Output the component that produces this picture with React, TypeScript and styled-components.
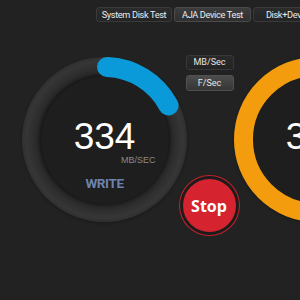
import React from "react";
import styled, { createGlobalStyle } from "styled-components";

const Global = createGlobalStyle`
  html, body {
    margin: 0;
    padding: 0;
    background: #222222;
    overflow: hidden;
  }
  body {
    font-family: "Open Sans", "Liberation Sans", sans-serif;
  }
`;

const Page = styled.div`
  width: 420px;
  height: 300px;
  padding-top: 7px;
  box-sizing: border-box;
  background: #222222;
`;

const TabBar = styled.div`
  display: flex;
  gap: 2px;
  margin-left: 96px;
`;

const Tab = styled.div<{ $w: number; $active?: boolean }>`
  width: ${(p) => p.$w}px;
  height: 15px;
  box-sizing: border-box;
  border: 1px solid ${(p) => (p.$active ? "#4a4a4a" : "#3a3a3a")};
  border-radius: 3px;
  background: ${(p) =>
    p.$active ? "linear-gradient(#3d3d3d, #2f2f2f)" : "linear-gradient(#2c2c2c, #242424)"};
  color: #ececec;
  font-family: Roboto, "Liberation Sans", sans-serif;
  font-size: 9.2px;
  letter-spacing: -0.35px;
  line-height: 13px;
  text-align: center;
  white-space: nowrap;
  overflow: hidden;
`;

const Main = styled.div`
  display: flex;
  align-items: flex-start;
  margin-top: 35px;
  padding-left: 22px;
`;

const GaugeBox = styled.div`
  position: relative;
  width: 165px;
  height: 165px;
  flex: none;
  border-radius: 50%;
  background: radial-gradient(
    closest-side,
    #202020 76%,
    #2a2a2a 82%,
    #363636 95%,
    #2f2f2f 100%
  );
  box-shadow: 0 1px 3px rgba(0, 0, 0, 0.3);
  display: flex;
  align-items: center;
  justify-content: center;
`;

const Disc = styled.div`
  width: 128px;
  height: 128px;
  border-radius: 50%;
  background: #1e1e1e;
  box-shadow: 0 0 4px 1px rgba(0, 0, 0, 0.45);
  display: flex;
  flex-direction: column;
  align-items: center;
  padding-top: 42px;
  box-sizing: border-box;
`;

const Value = styled.div`
  font-family: "Liberation Sans", Arial, sans-serif;
  font-size: 37px;
  line-height: 37px;
  color: #ffffff;
`;

const Unit = styled.div`
  align-self: stretch;
  text-align: right;
  padding-right: 13px;
  font-family: "Liberation Sans", Arial, sans-serif;
  font-size: 9px;
  line-height: 10px;
  color: #8a8a8a;
`;

const Label = styled.div<{ $color: string }>`
  margin-top: 11px;
  font-family: Roboto, "Liberation Sans", sans-serif;
  font-weight: 700;
  font-size: 13.5px;
  line-height: 14px;
  letter-spacing: -0.4px;
  color: ${(p) => p.$color};
`;

const ArcLayer = styled.svg`
  position: absolute;
  left: 0;
  top: 0;
  width: 165px;
  height: 165px;
  pointer-events: none;
`;

const Middle = styled.div`
  width: 47px;
  flex: none;
  display: flex;
  flex-direction: column;
  align-items: center;
  margin-top: -2px;
`;

const UnitButton = styled.div<{ $active?: boolean; $h: number }>`
  flex: none;
  width: 48px;
  margin-right: 2px;
  height: ${(p) => p.$h}px;
  box-sizing: border-box;
  border: 1px solid ${(p) => (p.$active ? "#505050" : "#383838")};
  border-radius: 3px;
  background: ${(p) =>
    p.$active ? "linear-gradient(#4c4c4c, #363636)" : "linear-gradient(#2a2a2a, #232323)"};
  color: #e6e6e6;
  font-family: Roboto, "Liberation Sans", sans-serif;
  font-size: 9px;
  line-height: ${(p) => p.$h - 2}px;
  text-align: center;
  & + & {
    margin-top: 5px;
  }
`;

const StopButton = styled.div`
  margin-top: 88px;
  margin-right: 3px;
  flex: none;
  width: 53px;
  height: 53px;
  border-radius: 50%;
  background: #d5232f;
  box-shadow: 0 0 0 3px #1c1c1c, 0 0 0 4px #c0222c;
  display: flex;
  align-items: center;
  justify-content: center;
  color: #ffffff;
  font-family: "Open Sans", "Liberation Sans", sans-serif;
  font-weight: 700;
  font-size: 16px;
  line-height: 16px;
`;

function arcPath(cx: number, cy: number, r: number, a0: number, a1: number) {
  const rad = (d: number) => (d * Math.PI) / 180;
  const x0 = cx + r * Math.sin(rad(a0));
  const y0 = cy - r * Math.cos(rad(a0));
  const x1 = cx + r * Math.sin(rad(a1));
  const y1 = cy - r * Math.cos(rad(a1));
  const large = a1 - a0 > 180 ? 1 : 0;
  return `M ${x0} ${y0} A ${r} ${r} 0 ${large} 1 ${x1} ${y1}`;
}

type GaugeProps = {
  value: string;
  label: string;
  labelColor: string;
  color: string;
  start: number;
  end: number;
  full?: boolean;
};

function Gauge({ value, label, labelColor, color, start, end, full }: GaugeProps) {
  return (
    <GaugeBox>
      <Disc>
        <Value>{value}</Value>
        <Unit>MB/SEC</Unit>
        <Label $color={labelColor}>{label}</Label>
      </Disc>
      <ArcLayer viewBox="0 0 165 165">
        {full ? (
          <circle cx="82.5" cy="82.5" r="73" fill="none" stroke={color} strokeWidth="19" />
        ) : (
          <path
            d={arcPath(82.5, 82.5, 72.5, start, end)}
            fill="none"
            stroke={color}
            strokeWidth="20"
            strokeLinecap="round"
          />
        )}
      </ArcLayer>
    </GaugeBox>
  );
}

export default function App() {
  return (
    <>
      <Global />
      <Page>
        <TabBar>
          <Tab $w={76}>System Disk Test</Tab>
          <Tab $w={77} $active>
            AJA Device Test
          </Tab>
          <Tab $w={90}>Disk+Device Test</Tab>
        </TabBar>
        <Main>
          <Gauge
            value="334"
            label="WRITE"
            labelColor="#6c83ae"
            color="#0b9ad9"
            start={2}
            end={62}
          />
          <Middle>
            <UnitButton $h={15}>MB/Sec</UnitButton>
            <UnitButton $h={16} $active>
              F/Sec
            </UnitButton>
            <StopButton>Stop</StopButton>
          </Middle>
          <Gauge
            value="351"
            label="READ"
            labelColor="#c88e2c"
            color="#f39c0e"
            start={0}
            end={360}
            full
          />
        </Main>
      </Page>
    </>
  );
}
